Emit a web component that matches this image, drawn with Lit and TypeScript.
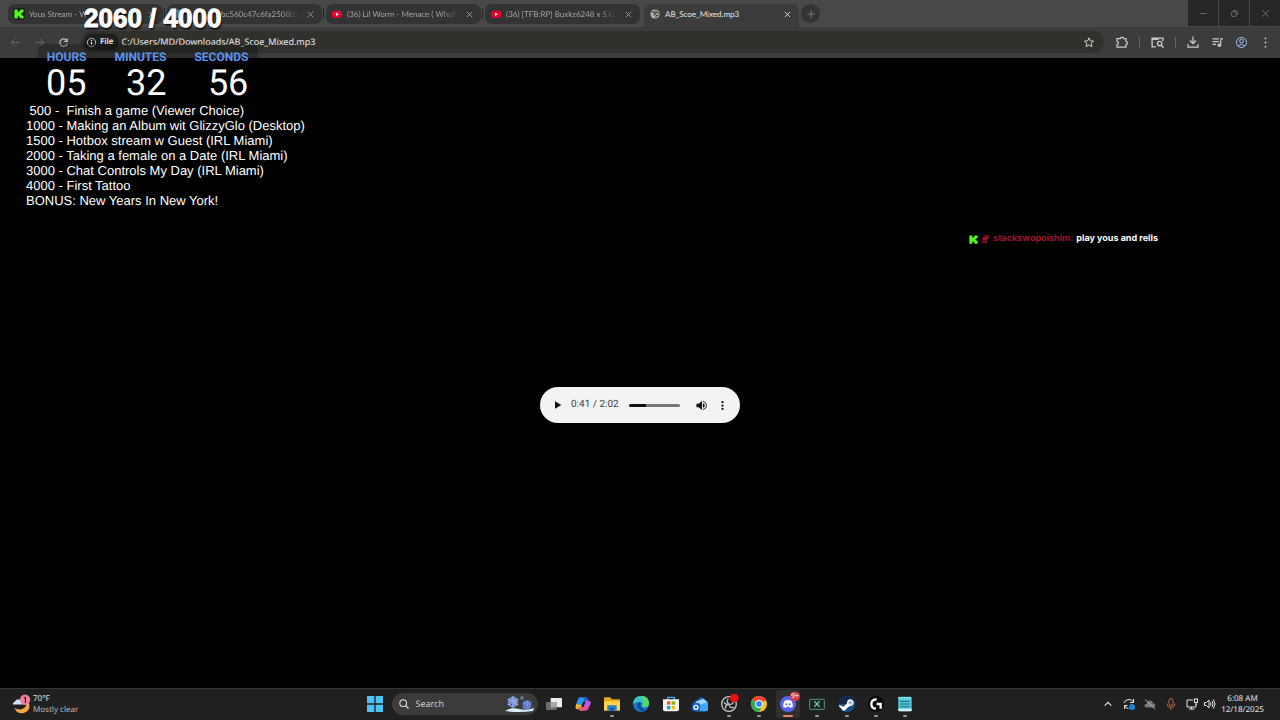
import { LitElement, html, css, svg, TemplateResult } from "lit";
import { customElement, property } from "lit/decorators.js";
import { classMap } from "lit/directives/class-map.js";
import { styleMap } from "lit/directives/style-map.js";

const reset = css`
  * { box-sizing: border-box; }
  :host { text-rendering: geometricPrecision; }
  button, input {
    appearance: none; border: 0; margin: 0; padding: 0; background: none;
    color: inherit; font: inherit; outline: none; min-width: 0; text-rendering: inherit;
  }
  button { display: grid; place-items: center; }
  svg { display: block; overflow: visible; }
`;

const icon = (size: number, body: TemplateResult, box = 24) =>
  html`<svg width=${size} height=${size} viewBox="0 0 ${box} ${box}" fill="none" stroke="currentColor" stroke-width="2" aria-hidden="true">${body}</svg>`;

const kick = svg`<path d="M1 1h8v6h3V4h3V1h8v7h-3v3h-3v2h3v3h3v7h-8v-3h-3v-3H9v6H1z" fill="#53fc18" stroke="none"/>`;
const kickTile = svg`<rect x="-1" y="-1" width="26" height="26" rx="2" fill="#0b0f0a" stroke="none"/>${kick}`;
const youtube = svg`<rect x="0" y="4" width="24" height="17" rx="5" fill="#e8002d" stroke="none"/><path d="M9.500 8.500v8l7-4z" fill="#fff" stroke="none"/>`;
const globe = svg`<circle cx="12" cy="12" r="11" fill="#b4b4b4" stroke="none"/><path d="M4 7l7 1 2 4-5 3M14 3l1 5 6 2M14 21l1-5 5-2" stroke="#3f3f3f" stroke-width="3"/>`;
const sheet = svg`<rect x="1" y="2" width="22" height="20" rx="3" fill="#2f8fc4" stroke="none"/>`;

@customElement("browser-tabs")
class BrowserTabs extends LitElement {
  static styles = [reset, css`
    :host { display: flex; background: #484848; height: 27px; padding-left: 8px; color: #a2a2a2; font: 8px/12px Lato, sans-serif; }
    .tab { display: flex; align-items: center; width: 155px; height: 20px; margin: 4px 4px 0 0; padding: 0 6px; gap: 5px; border-radius: 7px; background: #333; position: relative; }
    .tab + .tab::before { content: ""; position: absolute; left: -3px; top: 4px; width: 1px; height: 11px; background: #222; }
    .tab.active { background: #3c3c3c; color: #e6e6e6; height: 23px; margin-right: 2px; border-radius: 7px 7px 0 0; padding-bottom: 3px; }
    .tab.active::before { display: none; }
    .title { flex: 1; display: block; text-align: left; white-space: nowrap; overflow: hidden; mask-image: linear-gradient(90deg, #000 85%, transparent); }
    .title.shifted { padding-left: 33px; }
    .active .title { mask-image: none; }
    .close { width: 12px; height: 12px; }
    .add { width: 19px; height: 19px; border-radius: 50%; background: #343434; margin-top: 4px; color: #777; }
    .window { display: flex; margin-left: auto; gap: 1px; height: 26px; color: #777; }
    .window button { width: 30px; background: #262626; }
  `];
  render() {
    const tabs = [
      { t: "Yous Stream - W", i: kickTile },
      { t: "bc560c47c6fa250802", i: sheet, shifted: true },
      { t: "(36) Lil Worm - Menace ( WhoF", i: youtube },
      { t: "(36) [TFB:RP] Buxkz6248 x S.G -", i: youtube },
      { t: "AB_Scoe_Mixed.mp3", i: globe, active: true },
    ];
    return html`
      ${tabs.map((t) => html`<div class=${classMap({ tab: true, active: !!t.active })}>
        ${icon(10, t.i)}
        <button class=${classMap({ title: true, shifted: !!t.shifted })}>${t.t}</button>
        <button class="close" aria-label="Close tab">${icon(7, svg`<path d="M3 3l18 18M21 3L3 21" stroke-width="3"/>`)}</button>
      </div>`)}
      <button class="add" aria-label="New tab">${icon(8, svg`<path d="M12 1v22M1 12h22" stroke-width="3"/>`)}</button>
      <div class="window">
        <button aria-label="Minimize">${icon(7, svg`<path d="M1 12h22" stroke-width="3"/>`)}</button>
        <button aria-label="Restore">${icon(7, svg`<rect x="2" y="6" width="15" height="16" rx="3" stroke-width="3"/><path d="M7 2h12q3 0 3 3v12" stroke-width="3"/>`)}</button>
        <button aria-label="Close">${icon(7, svg`<path d="M1 1l22 22M23 1L1 23" stroke-width="3"/>`)}</button>
      </div>`;
  }
}

@customElement("browser-toolbar")
class BrowserToolbar extends LitElement {
  static styles = [reset, css`
    :host { display: flex; align-items: center; height: 31px; padding: 0 3px 1px 7px; background: #3c3c3c; color: #c8c8c8; font: 9px/14px "Noto Sans", sans-serif; }
    .nav { display: flex; }
    .nav button { width: 16px; height: 16px; margin-right: 8px; }
    .nav .off { color: #757575; }
    .box { flex: 1; display: flex; align-items: center; height: 22px; margin-left: 2px; padding: 0 10px 0 3px; border-radius: 11px; background: #30302c; color: #eee; }
    .chip { display: flex; align-items: center; gap: 4px; height: 16px; padding: 0 5px 0 3px; border-radius: 8px; background: #1f1f1d; font-size: 8px; font-weight: 600; }
    .url { flex: 1; margin-left: 3px; }
    .tools { display: flex; align-items: center; }
    .tools button { width: 24px; }
    .tools .wide { width: 35px; }
    .tools .downloads { margin-left: 5px; }
    .bar { width: 1px; height: 11px; background: #666; }
  `];
  render() {
    return html`
      <div class="nav">
        <button class="off" aria-label="Back">${icon(9, svg`<path d="M23 12H2M11 2L1 12l10 10"/>`)}</button>
        <button class="off" aria-label="Forward">${icon(9, svg`<path d="M1 12h21M13 2l10 10-10 10"/>`)}</button>
        <button aria-label="Reload">${icon(9, svg`<path d="M20 6a10 10 0 1 0 2 9M22 1v8h-8" stroke-width="3"/>`)}</button>
      </div>
      <div class="box">
        <button class="chip">${icon(9, svg`<circle cx="12" cy="12" r="11"/><path d="M12 10v8M12 5v3" stroke-width="3"/>`)}<span>File</span></button>
        <input class="url" aria-label="Address" value="C:/Users/MD/Downloads/AB_Scoe_Mixed.mp3">
        <button aria-label="Bookmark">${icon(10, svg`<path d="M12 2l3 7 8 1-6 5 2 8-7-4-7 4 2-8-6-5 8-1z"/>`)}</button>
      </div>
      <div class="tools">
        <button class="wide" aria-label="Extensions">${icon(12, svg`<path d="M2 5h7q0-3 3-3t3 3h5v6q3 0 3 3t-3 3v5H2v-5q3 0 3-3t-3-3z" stroke-width="2.500"/>`)}</button>
        <span class="bar"></span>
        <button class="wide" aria-label="Search with Lens">${icon(13, svg`<path d="M9 20H2V4h20v5M2 6h12" stroke-width="2.500"/><circle cx="16" cy="14" r="4" stroke-width="2.500"/><path d="M19 17l4 5" stroke-width="2.500"/>`)}</button>
        <span class="bar"></span>
        <button class="downloads" aria-label="Downloads">${icon(12, svg`<path d="M12 1v14M6 9l6 6 6-6M2 16v6h20v-6" stroke-width="2.500"/>`)}</button>
        <button aria-label="Media">${icon(11, svg`<path d="M1 4h14M1 10h14M1 16h8M19 18V4h5" stroke-width="2.500"/><circle cx="16" cy="18" r="3" fill="currentColor"/>`)}</button>
        <button aria-label="Profile">${icon(11, svg`<g stroke="#a8c7fa"><circle cx="12" cy="12" r="11"/><circle cx="12" cy="9" r="4"/><path d="M5 19q7-6 14 0"/></g>`)}</button>
        <button aria-label="Menu">${icon(11, svg`<g fill="currentColor" stroke="none"><circle cx="12" cy="3" r="2"/><circle cx="12" cy="12" r="2"/><circle cx="12" cy="21" r="2"/></g>`)}</button>
      </div>`;
  }
}

@customElement("audio-player")
class AudioPlayer extends LitElement {
  @property({ type: Number }) position = 41;
  @property({ type: Number }) duration = 122;
  static styles = [reset, css`
    :host { display: flex; align-items: center; width: 200px; height: 36px; padding: 0 10px; border-radius: 18px; background: #f1f3f4; color: #111; font: 10px/14px Roboto, sans-serif; }
    button { width: 15px; height: 20px; }
    .time { margin: 0 10px 0 6px; color: #444; white-space: nowrap; }
    .seek { flex: 1; height: 3px; border-radius: 2px; background: linear-gradient(90deg, #111 var(--done), #777 var(--done)); }
    .seek::-webkit-slider-thumb { appearance: none; width: 1px; height: 1px; }
    .volume { margin: 0 6px 0 14px; }
  `];
  private clock(s: number) { return `${Math.floor(s / 60)}:${String(s % 60).padStart(2, "0")}`; }
  render() {
    return html`
      <button aria-label="Play">${icon(8, svg`<path d="M3 1v22l19-11z" fill="currentColor" stroke="none"/>`)}</button>
      <span class="time">${this.clock(this.position)} / ${this.clock(this.duration)}</span>
      <input class="seek" type="range" aria-label="Seek" min="0" max=${this.duration} .value=${String(this.position)} style=${styleMap({ "--done": `${(this.position / this.duration) * 100}%` })}>
      <button class="volume" aria-label="Mute">${icon(11, svg`<path d="M1 8h5l7-6v20l-7-6H1z" fill="currentColor" stroke="none"/><path d="M15 7q4 1 4 5t-4 5z" fill="currentColor" stroke="none"/><path d="M15 3q8 2 8 9t-8 9"/>`)}</button>
      <button aria-label="More">${icon(9, svg`<g fill="currentColor" stroke="none"><circle cx="12" cy="3" r="3"/><circle cx="12" cy="12" r="3"/><circle cx="12" cy="21" r="3"/></g>`)}</button>`;
  }
}

const flake = (x: number, y: number, r: number, c: string) => svg`<g transform="translate(${x} ${y}) scale(${r})" stroke=${c} stroke-width=".24">
  ${[0, 60, 120].map((a) => svg`<path transform="rotate(${a})" d="M0-1V1M-.35-.8L0-.5L.35-.8M-.35.8L0 .5L.35.8M-.35-.4L0-.1L.35-.4"/>`)}</g>`;

const apps: { name: string; art: TemplateResult; run?: boolean; active?: boolean }[] = [
  { name: "Task view", art: svg`<rect x="7" y="3" width="17" height="14" rx="1" fill="#eee"/><rect x="0" y="9" width="16" height="12" rx="1" fill="#6d6d6d"/><path d="M7 9h9v8H7z" fill="#a9a9a9"/>` },
  { name: "Copilot", art: svg`<path d="M8 2h8q2 0 3 3l1 3h-6q-2 0-3 3l-3 9H4q-4 0-3-5l3-9q1-4 4-4z" fill="#2a9be8"/><path d="M8 2h8q2 0 3 3l1 3h-5L13 4q-1-2-5-2z" fill="#2456d8"/><path d="M2 12l-1 4q0 4 4 4h3l2-6z" fill="#f2b72e"/><path d="M16 22H9q-2 0-3-3l-1-2h6q2 0 3-3l3-7h3q4 0 3 5l-3 7q-1 3-4 3z" fill="#e24fa4"/><path d="M16 7h4q4 0 3 5l-1 3h-8z" fill="#b45cf0"/><path d="M9 22q-2 0-3-3l-1-2h6l-1 3q0 2 3 2z" fill="#f2703a"/>` },
  { name: "File Explorer", run: true, art: svg`<path d="M0 3q0-1 1-1h8l3 3h11q1 0 1 1v15H0z" fill="#e7a81c"/><path d="M0 8h24v13q0 1-1 1H1q-1 0-1-1z" fill="#ffd24a"/><path d="M5 15q0-1 1-1h12q1 0 1 1v7H5z" fill="#1e82cf"/><path d="M9 18h6v4H9z" fill="#105a9c"/>` },
  { name: "Edge", art: svg`<circle cx="12" cy="12" r="12" fill="#1673c9"/><path d="M0 12Q1 0 12 0t12 11q0 6-7 6-4 0-3-3 1-5-5-5-6 0-9 3z" fill="#38c5c0"/><path d="M12 0q12 0 12 11 0 6-7 6-4 0-3-3 4-7-2-14z" fill="#5bd768"/><path d="M9 9q-5 6 0 11 5 5 11 0-4 1-7-2-4-4-1-8z" fill="#0b4a99"/>` },
  { name: "Store", art: svg`<path d="M7 6V2h10v4" fill="none" stroke="#3fa9ea" stroke-width="2"/><path d="M0 5h24v15q0 3-3 3H3q-3 0-3-3z" fill="#f3f3f3"/><path d="M6 8h5v5H6z" fill="#f25022"/><path d="M13 8h5v5h-5z" fill="#7fba00"/><path d="M6 15h5v5H6z" fill="#00a4ef"/><path d="M13 15h5v5h-5z" fill="#ffb900"/>` },
  { name: "Outlook", art: svg`<path d="M2 10L14 1l10 8v11q0 3-3 3H6z" fill="#1b62bd"/><path d="M5 9l12-5 6 5-9 8z" fill="#9cd7ff"/><path d="M3 16l21-7v11q0 3-3 3H6z" fill="#3fa9f5"/><rect y="11" width="12" height="12" rx="2" fill="#0f5bb5"/><circle cx="6" cy="17" r="3" fill="none" stroke="#fff" stroke-width="2"/>` },
  { name: "OBS", run: true, art: svg`<circle cx="12" cy="12" r="11" fill="#202020" stroke="#c8c8c8" stroke-width="2"/><path d="M11 4q-4 4 1 8 5 2 7-4M12 12q-6 1-5 7M12 12q0 7 8 5M5 9q0 4 7 3" fill="none" stroke="#bbb" stroke-width="2"/><circle cx="20" cy="3" r="6.500" fill="#f20d0d"/>` },
  { name: "Chrome", run: true, art: svg`<circle cx="12" cy="12" r="12" fill="#fbc116"/><path d="M12 12L1.600 6A12 12 0 0 1 22.400 6z" fill="#ea4335"/><path d="M12 12l-10.400-6A12 12 0 0 0 12 24l5-9z" fill="#34a853"/><path d="M12 6h10.400" stroke="#ea4335" stroke-width="1"/><circle cx="12" cy="12" r="6" fill="#fff"/><circle cx="12" cy="12" r="4.600" fill="#4285f4"/>` },
  { name: "Discord", run: true, active: true, art: svg`<circle cx="12" cy="12" r="12" fill="#5865f2"/><path d="M7 7q5-2 10 0 3 5 2 9l-4 2-1-2h-4l-1 2-4-2q-1-4 2-9z" fill="#fff"/><circle cx="9.500" cy="12.500" r="1.600" fill="#5865f2"/><circle cx="14.500" cy="12.500" r="1.600" fill="#5865f2"/>` },
  { name: "Remote", run: true, art: svg`<rect x="1" y="5" width="22" height="15" rx="1" fill="#17241f" stroke="#5c8f7c" stroke-width="1.500"/><path d="M8 8l8 8M16 8l-8 8" stroke="#7db7a0" stroke-width="2"/>` },
  { name: "Steam", run: true, art: svg`<circle cx="12" cy="12" r="12" fill="#14528c"/><path d="M12 0a12 12 0 0 1 11 8L12 12 0 12Q0 1 12 0z" fill="#142a4c"/><path d="M0 13l7 3 5-5q0-6 5-6 5 1 5 5-1 5-6 5l-5 4q-1 3-4 3-3-1-3-3L1 17z" fill="#fff"/><circle cx="17" cy="10" r="3" fill="#9fb6d0"/>` },
  { name: "G HUB", run: true, art: svg`<circle cx="12" cy="12" r="12" fill="#0a0a0a"/><path d="M13 5q-8 0-8 7t7 7M13 12h6v7" fill="none" stroke="#fff" stroke-width="3.500"/>` },
  { name: "Notepad", run: true, art: svg`<rect x="2" y="1" width="20" height="22" rx="2" fill="#54c7dc"/><path d="M2 19h20v2q0 2-2 2H4q-2 0-2-2z" fill="#d6eef2"/><path d="M2 3h20" stroke="#bdeef5" stroke-width="2" stroke-dasharray="2 2"/><path d="M5 8h14M5 12h14M5 16h14" stroke="#17677a" stroke-width="1.500"/>` },
];

@customElement("task-bar")
class TaskBar extends LitElement {
  static styles = [reset, css`
    :host { display: grid; grid-template-columns: 1fr auto 1fr; align-items: center; height: 32px; padding-bottom: 1px; border-top: 1px solid #343434; background: #202020; color: #e4e4e4; font: 8px/11px "Noto Sans", sans-serif; }
    .weather { display: flex; justify-self: start; align-items: center; gap: 2px; padding-left: 12px; text-align: left; }
    .weather span { display: block; }
    .weather .sky { color: #bbb; }
    .middle { display: flex; align-items: center; }
    .start { width: 24px; height: 24px; margin-right: 5px; }
    .search { display: flex; align-items: center; gap: 7px; width: 146px; height: 22px; padding: 0 3px 0 7px; margin-right: 4px; border-radius: 11px; background: #3b3b3b; }
    .search input { flex: 1; font: 9px/14px "Noto Sans", sans-serif; }
    .search input::placeholder { color: #d0d0d0; opacity: 1; }
    .apps { display: flex; justify-content: space-between; width: 376px; }
    .app { position: relative; width: 24px; height: 28px; border-radius: 4px; }
    .app.active { background: #303030; }
    .app.run::after { content: ""; position: absolute; left: 10px; bottom: 1px; width: 4px; height: 2px; border-radius: 1px; background: #9a9a9a; }
    .app.active::after { left: 7px; width: 10px; background: #e8836a; }
    .badge { position: absolute; right: 0; top: 2px; padding: 0 1px; border-radius: 5px; background: #d83b4f; color: #fff; font-size: 7px; line-height: 9px; }
    .tray { display: flex; justify-self: end; align-items: center; padding-right: 12px; }
    .tray button { width: 21px; height: 24px; }
    .tray .near { width: 15px; }
    .tray .mic { color: #b96a4b; }
    .tray .clock { display: block; width: 51px; text-align: right; white-space: nowrap; }
    .clock span { display: block; }
  `];
  render() {
    return html`
      <button class="weather">
        ${icon(19, svg`<g stroke="none"><path d="M18 7q2 9-6 11-5 1-9-2 3 8 11 7 9-2 8-11-1-3-4-5z" fill="#f5a93a"/><path d="M1 12q0-3 3-4 2-4 6-2 3 1 3 6z" fill="#cfe4f7"/><circle cx="16.500" cy="6" r="6.500" fill="#f0819a"/><path d="M15 4l2-1v7" fill="none" stroke="#40131d" stroke-width="1.500"/></g>`)}
        <span><span>70°F</span><span class="sky">Mostly clear</span></span>
      </button>
      <div class="middle">
        <button class="start" aria-label="Start">${icon(16, svg`<path d="M0 0h11v11H0zM13 0h11v11H13zM0 13h11v11H0zM13 13h11v11H13z" fill="#4cc2f5" stroke="none"/>`)}</button>
        <label class="search">${icon(10, svg`<circle cx="10" cy="10" r="8" stroke-width="2.500"/><path d="M16 16l7 7" stroke-width="3"/>`)}
          <input aria-label="Search" placeholder="Search">
          <svg width="30" height="18" viewBox="0 0 30 18" aria-hidden="true"><path d="M0 16q6-4 14-2t15-1l-1 3q-14 2-28 0z" fill="#dcecfb"/>${flake(8, 7, 6, "#8fa9f0")}${flake(22, 10, 5, "#6f93ee")}${flake(17, 3, 2, "#8792a8")}</svg>
        </label>
        <div class="apps">
          ${apps.map((a) => html`<button class=${classMap({ app: true, run: !!a.run, active: !!a.active })} aria-label=${a.name}>
            <svg width="16" height="16" viewBox="0 0 24 24" aria-hidden="true">${a.art}</svg>${a.active ? html`<span class="badge">9+</span>` : ""}
          </button>`)}
        </div>
      </div>
      <div class="tray">
        <button aria-label="Hidden icons">${icon(8, svg`<path d="M2 17L12 7l10 10" stroke-width="3.500"/>`)}</button>
        <button aria-label="Sync">${icon(12, svg`<path d="M2 10Q4 3 12 3q6 0 9 5M21 2v7h-7M3 22v-7h6M3 15q2 6 8 6"/><circle cx="18" cy="18" r="6" fill="#1683d8" stroke="none"/>`)}</button>
        <button aria-label="Cloud storage">${icon(12, svg`<path d="M6 19q-5 0-5-4t5-4q1-6 6-6t6 6q5 0 5 4t-5 4z" fill="#777" stroke="none"/><path d="M2 3l20 19" stroke="#b5b5b5"/>`)}</button>
        <button class="mic" aria-label="Microphone">${icon(12, svg`<rect x="8" y="1" width="8" height="14" rx="4"/><path d="M4 11q0 8 8 8t8-8M12 19v5"/>`)}</button>
        <button aria-label="Network">${icon(12, svg`<path d="M14 4H2v14h18v-6M11 18v4M6 22h11"/><rect x="17" y="2" width="6" height="7"/><path d="M20 9v5"/>`)}</button>
        <button class="near" aria-label="Volume">${icon(12, svg`<path d="M1 9h4l5-5v16l-5-5H1zM13 9q2 3 0 6M16 6q4 6 0 12M19 3q6 9 0 18"/>`)}</button>
        <button class="clock"><span>6:08 AM</span><span>12/18/2025</span></button>
      </div>`;
  }
}

@customElement("app-root")
class AppRoot extends LitElement {
  static styles = [reset, css`
    :host { display: flex; flex-direction: column; min-height: 100vh; position: relative; background: #000; color: #fff; overflow: hidden; }
    .page { display: grid; flex: 1; place-items: center; padding-top: 64px; }
    .counter { position: absolute; left: 84px; top: 0; font: bold 26px/37px "Liberation Sans", sans-serif; -webkit-text-stroke: 1px #fff; text-shadow: 1px 2px 2px #000; white-space: nowrap; }
    .overlay { position: absolute; left: 26px; top: 44px; }
    .timer { display: flex; gap: 28px; width: 220px; margin-left: 12px; padding: 5px 0 0 8px; border-radius: 6px 6px 0 0; background: rgb(0 0 0 / 25%); text-align: right; }
    .label { font: bold 12px/16px Roboto, sans-serif; color: #5b94f0; }
    .value { font: 36px/36px Roboto, sans-serif; }
    .goals { list-style: none; margin: 2px 0 0; padding: 0; font: 13px/15px "Liberation Sans", sans-serif; white-space: pre; }
    .chat { position: absolute; right: 122px; top: 232px; display: flex; align-items: center; gap: 3px; margin: 0; font: bold 9px/14px Inter, sans-serif; white-space: pre; }
    .user { color: #a3122f; }
  `];
  render() {
    const goals = [
      " 500 -  Finish a game (Viewer Choice)",
      "1000 - Making an Album wit GlizzyGlo (Desktop)",
      "1500 - Hotbox stream w Guest (IRL Miami)",
      "2000 - Taking a female on a Date (IRL Miami)",
      "3000 - Chat Controls My Day (IRL Miami)",
      "4000 - First Tattoo",
      "BONUS: New Years In New York!",
    ];
    const units = [["HOURS", "05"], ["MINUTES", "32"], ["SECONDS", "56"]];
    return html`
      <browser-tabs></browser-tabs>
      <browser-toolbar></browser-toolbar>
      <div class="page"><audio-player></audio-player></div>
      <task-bar></task-bar>
      <div class="overlay">
        <div class="timer">${units.map(([l, v]) => html`<div><div class="label">${l}</div><div class="value">${v}</div></div>`)}</div>
        <ul class="goals">${goals.map((g) => html`<li>${g}</li>`)}</ul>
      </div>
      <div class="counter">2060 / 4000</div>
      <p class="chat">${icon(9, kick)}${icon(9, svg`<path d="M22 2H10L6 9h11l-4 7H2M23 6H11M14 12H4M16 20H3" stroke="#a3122f" stroke-width="3"/>`)}<span class="user">stackswopoishim:</span><span>play yous and rells</span></p>`;
  }
}
